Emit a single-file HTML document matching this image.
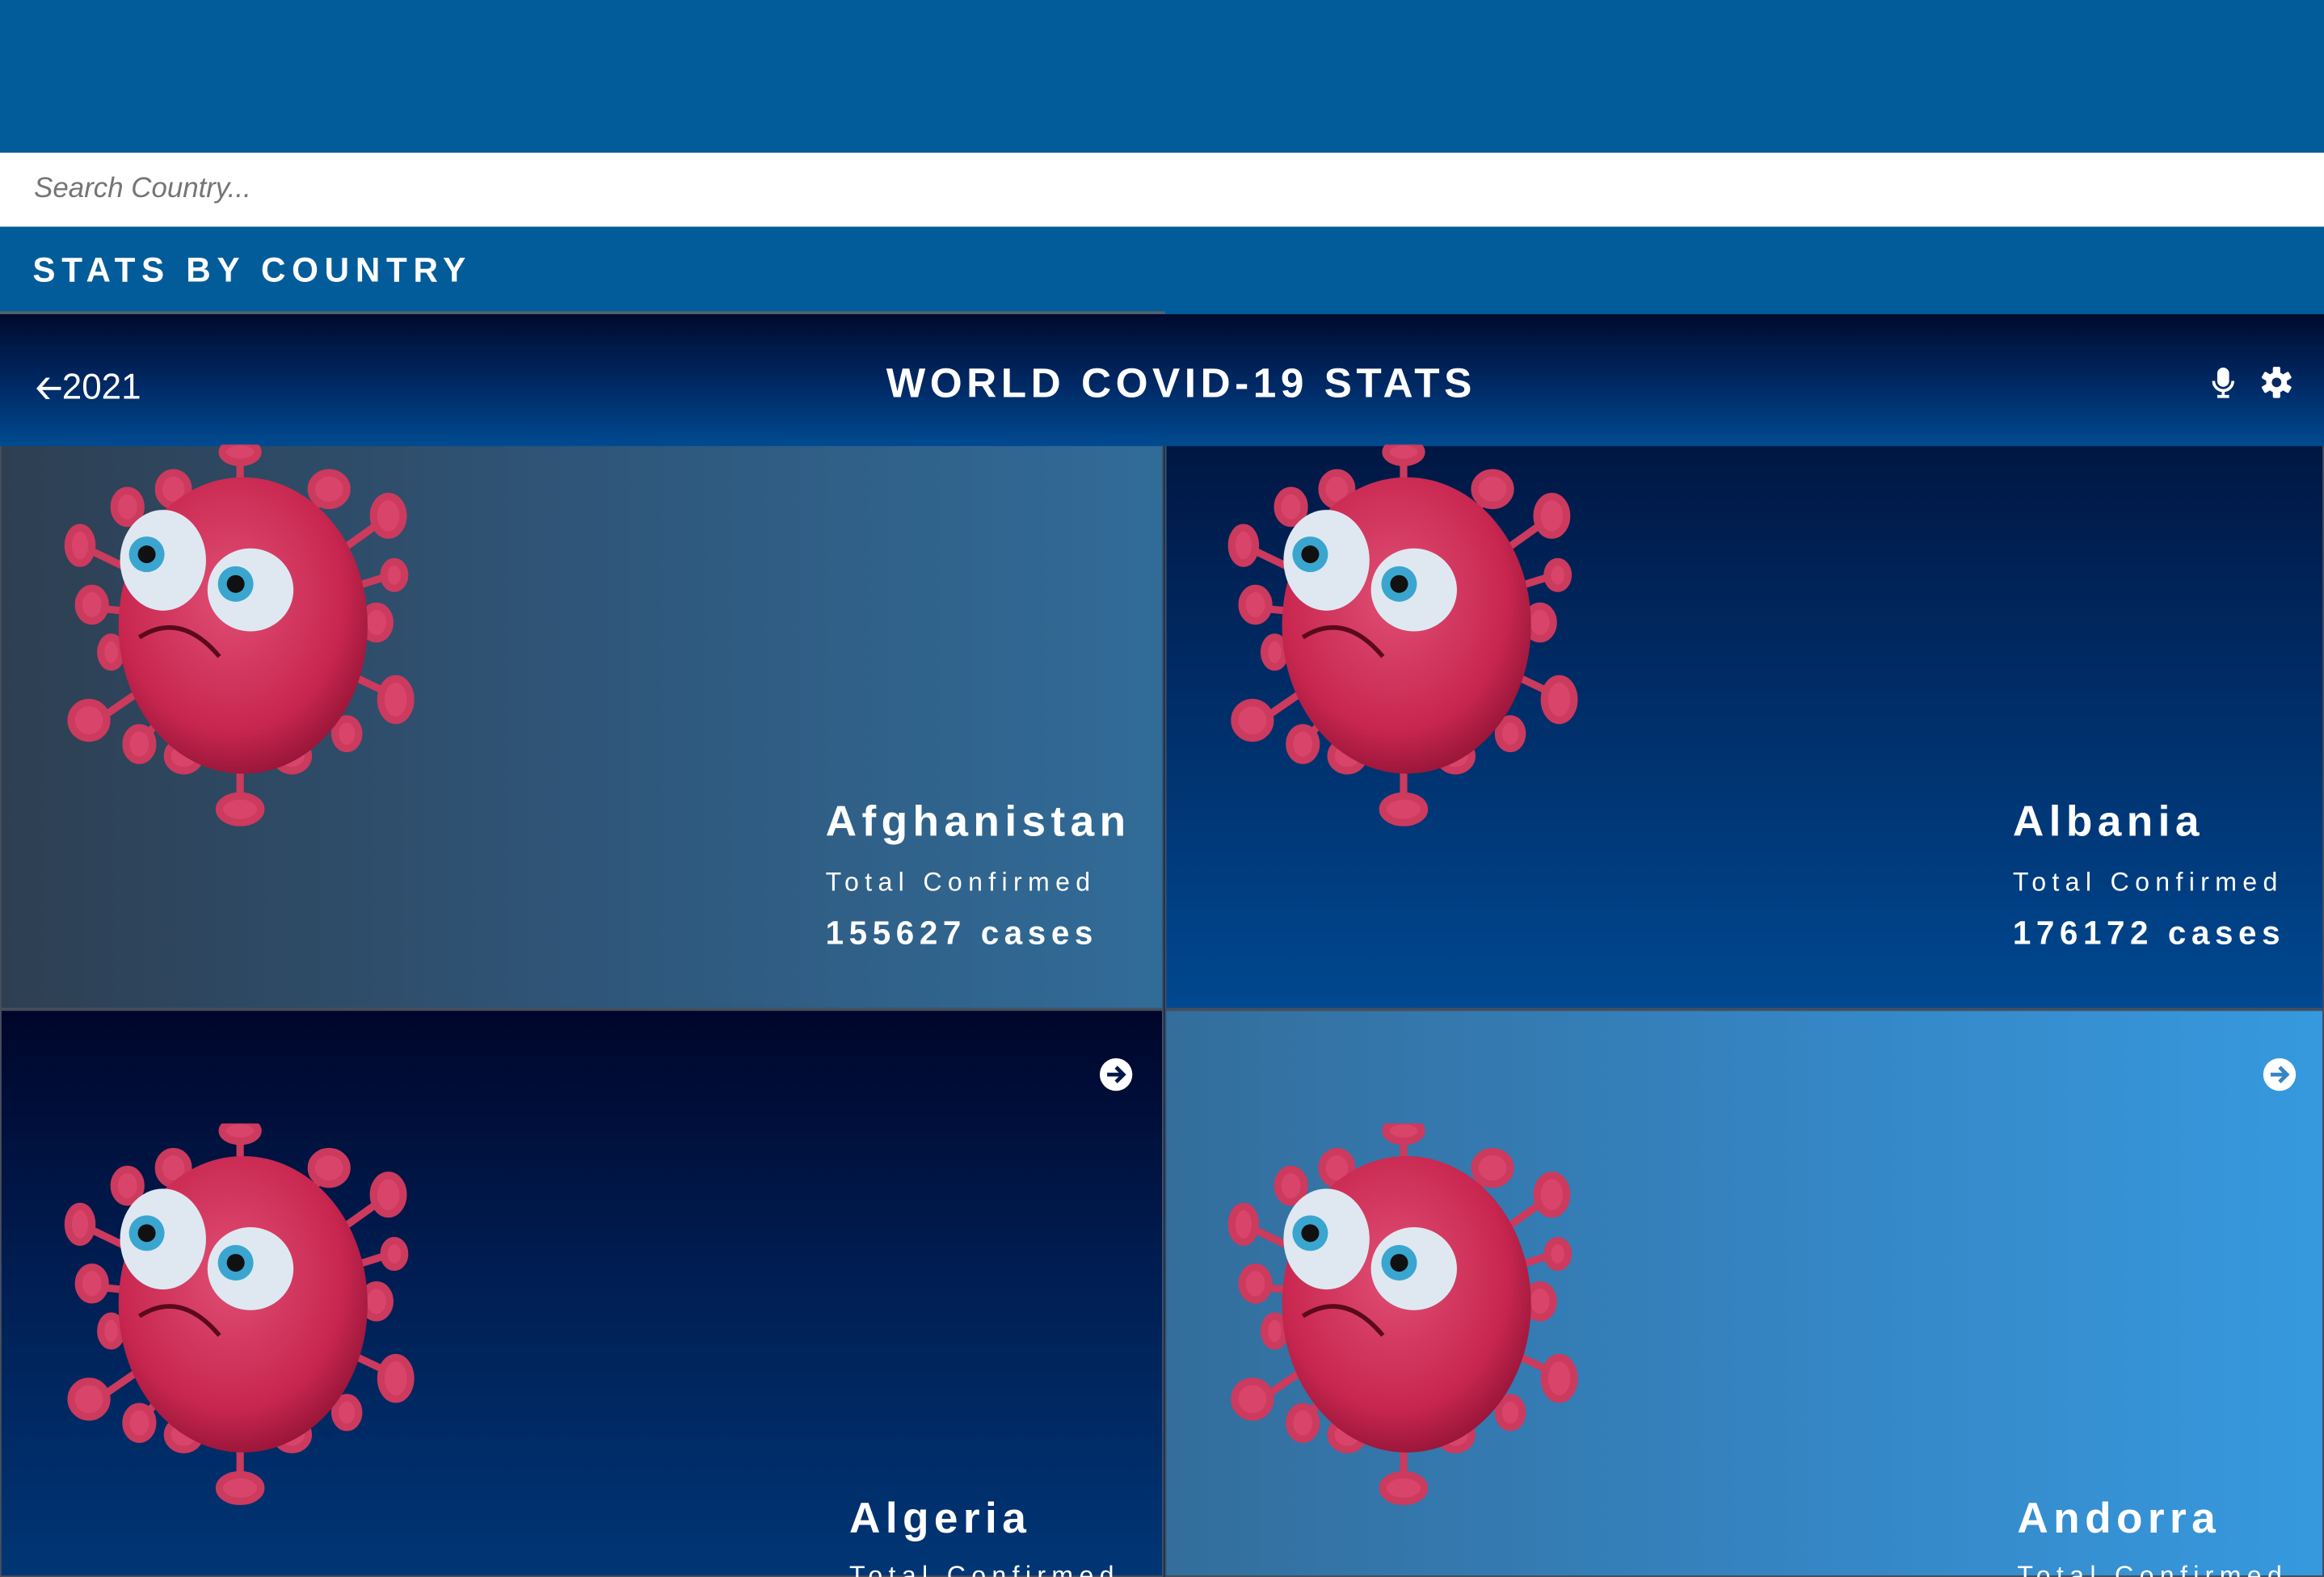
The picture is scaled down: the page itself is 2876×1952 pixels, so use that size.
<!DOCTYPE html>
<html><head><meta charset="utf-8"><style>
html,body{margin:0;padding:0;width:2876px;height:1952px;overflow:hidden;background:#02326a}
#w{position:absolute;left:0;top:0;width:1568px;height:1064px;transform:scale(1.83418,1.83459);transform-origin:0 0;font-family:"Liberation Sans",sans-serif;overflow:hidden}
.a{position:absolute}
.card{position:absolute;box-sizing:border-box;border:1px solid #4a4f5a;overflow:hidden}
.name{position:absolute;color:#fff;font-weight:bold;font-size:29px;letter-spacing:3.5px}
.tc{position:absolute;color:#fff;font-size:17.5px;letter-spacing:4px}
.cs{position:absolute;color:#fff;font-weight:bold;font-size:22px;letter-spacing:3.6px}
.vir{position:absolute;width:240px;height:260px}
</style></head><body><div id="w">
<div class="a" style="left:0;top:0;width:1568px;height:103px;background:#035c9a"></div>
<div class="a" style="left:0;top:103px;width:1568px;height:50px;background:#fff"></div>
<div class="a" style="left:23px;top:117px;font-size:19px;font-style:italic;color:#757575">Search Country...</div>
<div class="a" style="left:0;top:153px;width:1568px;height:59px;background:#035c9a"></div>
<div class="a" style="left:0;top:210px;width:786px;height:2px;background:#55606e"></div>
<div class="a" style="left:22px;top:169px;font-size:23px;font-weight:bold;letter-spacing:4.2px;color:#fff">STATS BY COUNTRY</div>

<div class="card" style="left:0;top:212px;width:785px;height:469px;background:linear-gradient(90deg,#2e3f52,#2f5a80 60%,#316c98)"></div>
<div class="card" style="left:786px;top:212px;width:782px;height:469px;background:linear-gradient(180deg,#000b30,#00275e 45%,#004890)"></div>
<div class="card" style="left:0;top:681px;width:785px;height:383px;background:linear-gradient(180deg,#00062a,#001f55 50%,#003675)"></div>
<div class="card" style="left:786px;top:681px;width:782px;height:383px;background:linear-gradient(90deg,#336e9c,#3583c0 50%,#3699de)"></div>

<div class="a" style="left:0;top:212px;width:1568px;height:89px;background:linear-gradient(180deg,#000a2e,#002a66 55%,#004a90)"></div>
<div class="a" style="left:24px;top:245px;font-size:24px;color:#fff"><span style="font-size:22px;font-weight:bold">&#129120;</span>2021</div>
<div class="a" style="left:0;width:1594px;top:243px;text-align:center;font-size:28px;font-weight:bold;letter-spacing:3px;color:#fff">WORLD COVID-19 STATS</div>
<svg class="a" style="left:1491px;top:247px" width="18" height="22" viewBox="0 0 18 22"><rect x="5" y="1" width="8" height="13" rx="4" fill="#fff"/><path d="M2.5 10 a6.5 6.5 0 0 0 13 0" stroke="#fff" stroke-width="2" fill="none"/><path d="M9 16.5V20M5 20.5h8" stroke="#fff" stroke-width="2"/></svg>
<svg class="a" style="left:1525px;top:247px" width="22" height="22" viewBox="-11 -11 22 22"><g fill="#fff"><circle r="7"/><rect x="-2.5" y="-10.5" width="5" height="21" rx="1"/><rect x="-2.5" y="-10.5" width="5" height="21" rx="1" transform="rotate(60)"/><rect x="-2.5" y="-10.5" width="5" height="21" rx="1" transform="rotate(120)"/></g><circle r="3.2" fill="#0a2a5e"/></svg>

<svg width="0" height="0" style="position:absolute"><defs>
<radialGradient id="bg" cx="0.45" cy="0.4" r="0.65"><stop offset="0" stop-color="#e04f74"/><stop offset="0.7" stop-color="#c8264f"/><stop offset="1" stop-color="#8e1234"/></radialGradient>
<g id="v">
<g stroke="#cc3a5e" stroke-width="5" fill="#d9456a">
<line x1="120" y1="120" x2="120" y2="5"/><ellipse cx="120" cy="5" rx="12" ry="7"/>
<line x1="120" y1="120" x2="120" y2="248"/><ellipse cx="120" cy="246" rx="14" ry="9"/>
<line x1="120" y1="120" x2="75" y2="30"/><ellipse cx="75" cy="30" rx="10" ry="11"/>
<line x1="120" y1="120" x2="180" y2="28"/><ellipse cx="180" cy="30" rx="12" ry="11"/>
<line x1="120" y1="120" x2="218" y2="50"/><ellipse cx="220" cy="48" rx="10" ry="13"/>
<line x1="120" y1="120" x2="222" y2="88"/><ellipse cx="224" cy="88" rx="7" ry="9"/>
<line x1="120" y1="120" x2="208" y2="120"/><ellipse cx="212" cy="120" rx="9" ry="11"/>
<line x1="120" y1="120" x2="225" y2="170"/><ellipse cx="225" cy="172" rx="10" ry="14"/>
<line x1="120" y1="120" x2="190" y2="195"/><ellipse cx="192" cy="195" rx="8" ry="10"/>
<line x1="120" y1="120" x2="155" y2="208"/><ellipse cx="155" cy="210" rx="11" ry="10"/>
<line x1="120" y1="120" x2="80" y2="208"/><ellipse cx="82" cy="210" rx="11" ry="10"/>
<line x1="120" y1="120" x2="52" y2="202"/><ellipse cx="52" cy="202" rx="9" ry="11"/>
<line x1="120" y1="120" x2="18" y2="190"/><ellipse cx="18" cy="186" rx="12" ry="12"/>
<line x1="120" y1="120" x2="20" y2="110"/><ellipse cx="20" cy="108" rx="9" ry="11"/>
<line x1="120" y1="120" x2="12" y2="68"/><ellipse cx="12" cy="68" rx="8" ry="12"/>
<line x1="120" y1="120" x2="45" y2="42"/><ellipse cx="44" cy="42" rx="9" ry="11"/>
<line x1="120" y1="120" x2="35" y2="140"/><ellipse cx="33" cy="140" rx="7" ry="10"/>
</g>
<ellipse cx="122" cy="122" rx="84" ry="100" fill="url(#bg)"/>
<ellipse cx="68" cy="78" rx="29" ry="34" fill="#dfe8f0"/>
<circle cx="57" cy="74" r="12" fill="#3aa6d0"/><circle cx="57" cy="74" r="6" fill="#111"/>
<ellipse cx="127" cy="98" rx="29" ry="28" fill="#dfe8f0"/>
<circle cx="117" cy="94" r="12" fill="#3aa6d0"/><circle cx="117" cy="94" r="6" fill="#111"/>
<path d="M52 130 Q80 112 106 143" stroke="#5a0a1c" stroke-width="3" fill="none"/>
</g></defs></svg>

<svg class="vir" style="left:42px;top:300px" viewBox="0 0 240 260"><use href="#v"/></svg>
<svg class="vir" style="left:827px;top:300px" viewBox="0 0 240 260"><use href="#v"/></svg>
<svg class="vir" style="left:42px;top:758px" viewBox="0 0 240 260"><use href="#v"/></svg>
<svg class="vir" style="left:827px;top:758px" viewBox="0 0 240 260"><use href="#v"/></svg>

<div class="name" style="left:557px;top:539px">Afghanistan</div>
<div class="tc" style="left:557px;top:585px">Total Confirmed</div>
<div class="cs" style="left:557px;top:617px">155627 cases</div>
<div class="name" style="left:1358px;top:539px">Albania</div>
<div class="tc" style="left:1358px;top:585px">Total Confirmed</div>
<div class="cs" style="left:1358px;top:617px">176172 cases</div>
<div class="name" style="left:573px;top:1009px">Algeria</div>
<div class="tc" style="left:573px;top:1053px">Total Confirmed</div>
<div class="name" style="left:1361px;top:1009px">Andorra</div>
<div class="tc" style="left:1361px;top:1053px">Total Confirmed</div>

<svg class="a" style="left:741px;top:713px" width="24" height="24" viewBox="0 0 24 24"><circle cx="12" cy="12" r="11" fill="#fff"/><path d="M6 12h10M12 7l5 5-5 5" stroke="#001848" stroke-width="2.6" fill="none"/></svg>
<svg class="a" style="left:1526px;top:713px" width="24" height="24" viewBox="0 0 24 24"><circle cx="12" cy="12" r="11" fill="#fff"/><path d="M6 12h10M12 7l5 5-5 5" stroke="#3585c4" stroke-width="2.6" fill="none"/></svg>
</div></body></html>
